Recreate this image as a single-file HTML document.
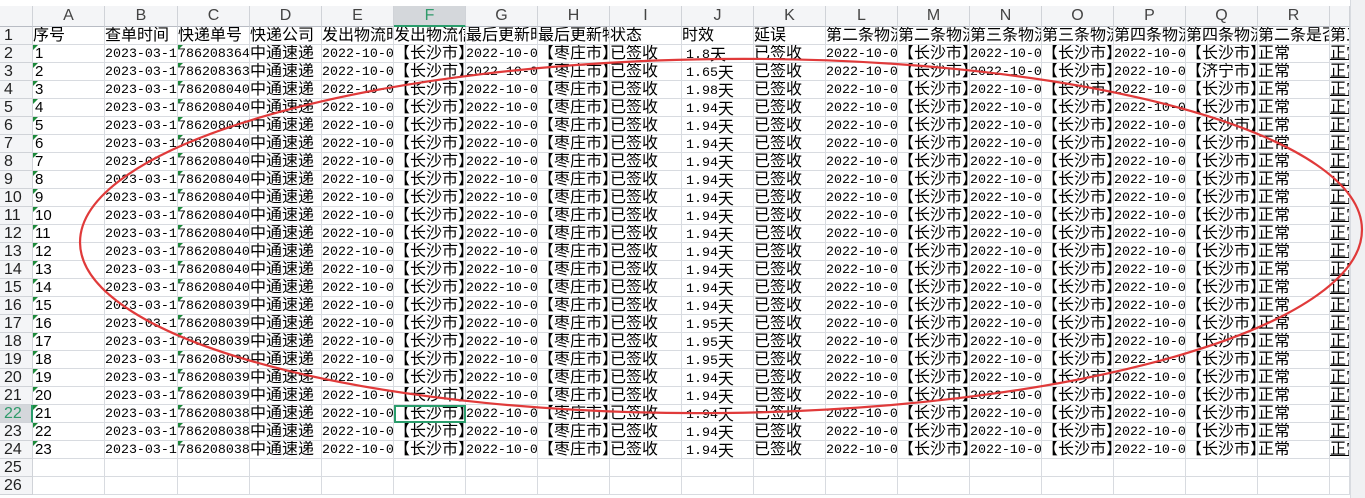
<!DOCTYPE html>
<html><head><meta charset="utf-8">
<style>
html,body{margin:0;padding:0;width:1365px;height:498px;overflow:hidden;background:#fff}
#wrap{position:absolute;left:0;top:0;width:1365px;height:498px;overflow:hidden}
table,thead,tbody{display:block}
table{position:absolute;left:0;top:6px;width:1350px;border-left:0}
tr{display:flex;height:18px}
thead tr{height:21px}
td,th{display:block;flex:none;box-sizing:border-box;height:18px;border-right:1px solid #d8dbe0;border-bottom:1px solid #d8dbe0;padding:0;line-height:18px;overflow:hidden;white-space:nowrap;font-family:"Liberation Sans","Noto Sans CJK SC",sans-serif;font-size:16px;color:#000;text-align:left;font-weight:normal;position:relative;width:72px}
tr>*:nth-child(1){width:33px}
tr>*:nth-child(3){width:73px}
tr>*:nth-child(20){width:20px}
thead th{height:21px;line-height:20px;background:#f4f5f7;color:#444;text-align:center;font-size:16px;border-color:#d0d3d8;border-bottom:1px solid #b8bcc4}
thead th.sel{background:#d4d7db;color:#2f9a6a;border-bottom:2px solid #2a9d6c}
tbody th{background:#f4f5f7;color:#222;padding-left:4px;font-size:16px;border-color:#d0d3d8}
tbody th.sel{background:#d4d7db;color:#2f9a6a;border-right:2px solid #2a9d6c}
.n{font-family:"Liberation Mono",monospace;font-size:13.3px}
.a{font-size:15px;padding-left:2px}
.j{padding-left:4px;font-family:"Liberation Mono",monospace;font-size:13.3px}
.j b{font-family:"Noto Sans CJK SC",sans-serif;font-size:16px;font-weight:normal;line-height:17px;vertical-align:-2px}
td.g::before{content:"";position:absolute;left:0;top:0;border-top:5px solid #1c8a3a;border-right:5px solid transparent}
td.s{outline:2px solid #2a9d6c;outline-offset:-2px}
td.u{text-decoration:underline}
#sb{position:absolute;left:1350px;top:0;width:15px;height:498px;background:#f0f1f3;border-left:1px solid #d8dbe0}
#th{position:absolute;left:1352px;top:42px;width:11px;height:412px;background:#dcdee3;border-radius:5px}
</style></head><body><div id="wrap">
<table>
<thead><tr><th style="background:#f4f5f7"></th><th>A</th><th>B</th><th>C</th><th>D</th><th>E</th><th class="sel">F</th><th>G</th><th>H</th><th>I</th><th>J</th><th>K</th><th>L</th><th>M</th><th>N</th><th>O</th><th>P</th><th>Q</th><th>R</th><th></th></tr></thead>
<tbody>
<tr><th>1</th><td>序号</td><td>查单时间</td><td>快递单号</td><td>快递公司</td><td>发出物流时间</td><td>发出物流信息</td><td>最后更新时间</td><td>最后更新物流</td><td>状态</td><td>时效</td><td>延误</td><td>第二条物流时间</td><td>第二条物流信息</td><td>第三条物流时间</td><td>第三条物流信息</td><td>第四条物流时间</td><td>第四条物流信息</td><td>第二条是否</td><td>第三</td></tr>
<tr><th>2</th><td class="g a">1</td><td class="n">2023-03-14</td><td class="g n">786208364</td><td>中通速递</td><td class="n">2022-10-01</td><td>【长沙市】</td><td class="n">2022-10-01</td><td>【枣庄市】</td><td>已签收</td><td class="j">1.8<b>天</b></td><td>已签收</td><td class="n">2022-10-01</td><td>【长沙市】</td><td class="n">2022-10-01</td><td>【长沙市】</td><td class="n">2022-10-01</td><td>【长沙市】</td><td>正常</td><td class="u">正常</td></tr>
<tr><th>3</th><td class="g a">2</td><td class="n">2023-03-14</td><td class="g n">786208363</td><td>中通速递</td><td class="n">2022-10-01</td><td>【长沙市】</td><td class="n">2022-10-01</td><td>【枣庄市】</td><td>已签收</td><td class="j">1.65<b>天</b></td><td>已签收</td><td class="n">2022-10-01</td><td>【长沙市】</td><td class="n">2022-10-01</td><td>【长沙市】</td><td class="n">2022-10-01</td><td>【济宁市】</td><td>正常</td><td class="u">正常</td></tr>
<tr><th>4</th><td class="g a">3</td><td class="n">2023-03-14</td><td class="g n">786208040</td><td>中通速递</td><td class="n">2022-10-01</td><td>【长沙市】</td><td class="n">2022-10-01</td><td>【枣庄市】</td><td>已签收</td><td class="j">1.98<b>天</b></td><td>已签收</td><td class="n">2022-10-01</td><td>【长沙市】</td><td class="n">2022-10-01</td><td>【长沙市】</td><td class="n">2022-10-01</td><td>【长沙市】</td><td>正常</td><td class="u">正常</td></tr>
<tr><th>5</th><td class="g a">4</td><td class="n">2023-03-14</td><td class="g n">786208040</td><td>中通速递</td><td class="n">2022-10-01</td><td>【长沙市】</td><td class="n">2022-10-01</td><td>【枣庄市】</td><td>已签收</td><td class="j">1.94<b>天</b></td><td>已签收</td><td class="n">2022-10-01</td><td>【长沙市】</td><td class="n">2022-10-01</td><td>【长沙市】</td><td class="n">2022-10-01</td><td>【长沙市】</td><td>正常</td><td class="u">正常</td></tr>
<tr><th>6</th><td class="g a">5</td><td class="n">2023-03-14</td><td class="g n">786208040</td><td>中通速递</td><td class="n">2022-10-01</td><td>【长沙市】</td><td class="n">2022-10-01</td><td>【枣庄市】</td><td>已签收</td><td class="j">1.94<b>天</b></td><td>已签收</td><td class="n">2022-10-01</td><td>【长沙市】</td><td class="n">2022-10-01</td><td>【长沙市】</td><td class="n">2022-10-01</td><td>【长沙市】</td><td>正常</td><td class="u">正常</td></tr>
<tr><th>7</th><td class="g a">6</td><td class="n">2023-03-14</td><td class="g n">786208040</td><td>中通速递</td><td class="n">2022-10-01</td><td>【长沙市】</td><td class="n">2022-10-01</td><td>【枣庄市】</td><td>已签收</td><td class="j">1.94<b>天</b></td><td>已签收</td><td class="n">2022-10-01</td><td>【长沙市】</td><td class="n">2022-10-01</td><td>【长沙市】</td><td class="n">2022-10-01</td><td>【长沙市】</td><td>正常</td><td class="u">正常</td></tr>
<tr><th>8</th><td class="g a">7</td><td class="n">2023-03-14</td><td class="g n">786208040</td><td>中通速递</td><td class="n">2022-10-01</td><td>【长沙市】</td><td class="n">2022-10-01</td><td>【枣庄市】</td><td>已签收</td><td class="j">1.94<b>天</b></td><td>已签收</td><td class="n">2022-10-01</td><td>【长沙市】</td><td class="n">2022-10-01</td><td>【长沙市】</td><td class="n">2022-10-01</td><td>【长沙市】</td><td>正常</td><td class="u">正常</td></tr>
<tr><th>9</th><td class="g a">8</td><td class="n">2023-03-14</td><td class="g n">786208040</td><td>中通速递</td><td class="n">2022-10-01</td><td>【长沙市】</td><td class="n">2022-10-01</td><td>【枣庄市】</td><td>已签收</td><td class="j">1.94<b>天</b></td><td>已签收</td><td class="n">2022-10-01</td><td>【长沙市】</td><td class="n">2022-10-01</td><td>【长沙市】</td><td class="n">2022-10-01</td><td>【长沙市】</td><td>正常</td><td class="u">正常</td></tr>
<tr><th>10</th><td class="g a">9</td><td class="n">2023-03-14</td><td class="g n">786208040</td><td>中通速递</td><td class="n">2022-10-01</td><td>【长沙市】</td><td class="n">2022-10-01</td><td>【枣庄市】</td><td>已签收</td><td class="j">1.94<b>天</b></td><td>已签收</td><td class="n">2022-10-01</td><td>【长沙市】</td><td class="n">2022-10-01</td><td>【长沙市】</td><td class="n">2022-10-01</td><td>【长沙市】</td><td>正常</td><td class="u">正常</td></tr>
<tr><th>11</th><td class="g a">10</td><td class="n">2023-03-14</td><td class="g n">786208040</td><td>中通速递</td><td class="n">2022-10-01</td><td>【长沙市】</td><td class="n">2022-10-01</td><td>【枣庄市】</td><td>已签收</td><td class="j">1.94<b>天</b></td><td>已签收</td><td class="n">2022-10-01</td><td>【长沙市】</td><td class="n">2022-10-01</td><td>【长沙市】</td><td class="n">2022-10-01</td><td>【长沙市】</td><td>正常</td><td class="u">正常</td></tr>
<tr><th>12</th><td class="g a">11</td><td class="n">2023-03-14</td><td class="g n">786208040</td><td>中通速递</td><td class="n">2022-10-01</td><td>【长沙市】</td><td class="n">2022-10-01</td><td>【枣庄市】</td><td>已签收</td><td class="j">1.94<b>天</b></td><td>已签收</td><td class="n">2022-10-01</td><td>【长沙市】</td><td class="n">2022-10-01</td><td>【长沙市】</td><td class="n">2022-10-01</td><td>【长沙市】</td><td>正常</td><td class="u">正常</td></tr>
<tr><th>13</th><td class="g a">12</td><td class="n">2023-03-14</td><td class="g n">786208040</td><td>中通速递</td><td class="n">2022-10-01</td><td>【长沙市】</td><td class="n">2022-10-01</td><td>【枣庄市】</td><td>已签收</td><td class="j">1.94<b>天</b></td><td>已签收</td><td class="n">2022-10-01</td><td>【长沙市】</td><td class="n">2022-10-01</td><td>【长沙市】</td><td class="n">2022-10-01</td><td>【长沙市】</td><td>正常</td><td class="u">正常</td></tr>
<tr><th>14</th><td class="g a">13</td><td class="n">2023-03-14</td><td class="g n">786208040</td><td>中通速递</td><td class="n">2022-10-01</td><td>【长沙市】</td><td class="n">2022-10-01</td><td>【枣庄市】</td><td>已签收</td><td class="j">1.94<b>天</b></td><td>已签收</td><td class="n">2022-10-01</td><td>【长沙市】</td><td class="n">2022-10-01</td><td>【长沙市】</td><td class="n">2022-10-01</td><td>【长沙市】</td><td>正常</td><td class="u">正常</td></tr>
<tr><th>15</th><td class="g a">14</td><td class="n">2023-03-14</td><td class="g n">786208040</td><td>中通速递</td><td class="n">2022-10-01</td><td>【长沙市】</td><td class="n">2022-10-01</td><td>【枣庄市】</td><td>已签收</td><td class="j">1.94<b>天</b></td><td>已签收</td><td class="n">2022-10-01</td><td>【长沙市】</td><td class="n">2022-10-01</td><td>【长沙市】</td><td class="n">2022-10-01</td><td>【长沙市】</td><td>正常</td><td class="u">正常</td></tr>
<tr><th>16</th><td class="g a">15</td><td class="n">2023-03-14</td><td class="g n">786208039</td><td>中通速递</td><td class="n">2022-10-01</td><td>【长沙市】</td><td class="n">2022-10-01</td><td>【枣庄市】</td><td>已签收</td><td class="j">1.94<b>天</b></td><td>已签收</td><td class="n">2022-10-01</td><td>【长沙市】</td><td class="n">2022-10-01</td><td>【长沙市】</td><td class="n">2022-10-01</td><td>【长沙市】</td><td>正常</td><td class="u">正常</td></tr>
<tr><th>17</th><td class="g a">16</td><td class="n">2023-03-14</td><td class="g n">786208039</td><td>中通速递</td><td class="n">2022-10-01</td><td>【长沙市】</td><td class="n">2022-10-01</td><td>【枣庄市】</td><td>已签收</td><td class="j">1.95<b>天</b></td><td>已签收</td><td class="n">2022-10-01</td><td>【长沙市】</td><td class="n">2022-10-01</td><td>【长沙市】</td><td class="n">2022-10-01</td><td>【长沙市】</td><td>正常</td><td class="u">正常</td></tr>
<tr><th>18</th><td class="g a">17</td><td class="n">2023-03-14</td><td class="g n">786208039</td><td>中通速递</td><td class="n">2022-10-01</td><td>【长沙市】</td><td class="n">2022-10-01</td><td>【枣庄市】</td><td>已签收</td><td class="j">1.95<b>天</b></td><td>已签收</td><td class="n">2022-10-01</td><td>【长沙市】</td><td class="n">2022-10-01</td><td>【长沙市】</td><td class="n">2022-10-01</td><td>【长沙市】</td><td>正常</td><td class="u">正常</td></tr>
<tr><th>19</th><td class="g a">18</td><td class="n">2023-03-14</td><td class="g n">786208039</td><td>中通速递</td><td class="n">2022-10-01</td><td>【长沙市】</td><td class="n">2022-10-01</td><td>【枣庄市】</td><td>已签收</td><td class="j">1.95<b>天</b></td><td>已签收</td><td class="n">2022-10-01</td><td>【长沙市】</td><td class="n">2022-10-01</td><td>【长沙市】</td><td class="n">2022-10-01</td><td>【长沙市】</td><td>正常</td><td class="u">正常</td></tr>
<tr><th>20</th><td class="g a">19</td><td class="n">2023-03-14</td><td class="g n">786208039</td><td>中通速递</td><td class="n">2022-10-01</td><td>【长沙市】</td><td class="n">2022-10-01</td><td>【枣庄市】</td><td>已签收</td><td class="j">1.94<b>天</b></td><td>已签收</td><td class="n">2022-10-01</td><td>【长沙市】</td><td class="n">2022-10-01</td><td>【长沙市】</td><td class="n">2022-10-01</td><td>【长沙市】</td><td>正常</td><td class="u">正常</td></tr>
<tr><th>21</th><td class="g a">20</td><td class="n">2023-03-14</td><td class="g n">786208039</td><td>中通速递</td><td class="n">2022-10-01</td><td>【长沙市】</td><td class="n">2022-10-01</td><td>【枣庄市】</td><td>已签收</td><td class="j">1.94<b>天</b></td><td>已签收</td><td class="n">2022-10-01</td><td>【长沙市】</td><td class="n">2022-10-01</td><td>【长沙市】</td><td class="n">2022-10-01</td><td>【长沙市】</td><td>正常</td><td class="u">正常</td></tr>
<tr><th class="sel">22</th><td class="g a">21</td><td class="n">2023-03-14</td><td class="g n">786208038</td><td>中通速递</td><td class="n">2022-10-01</td><td class="s">【长沙市】</td><td class="n">2022-10-01</td><td>【枣庄市】</td><td>已签收</td><td class="j">1.94<b>天</b></td><td>已签收</td><td class="n">2022-10-01</td><td>【长沙市】</td><td class="n">2022-10-01</td><td>【长沙市】</td><td class="n">2022-10-01</td><td>【长沙市】</td><td>正常</td><td class="u">正常</td></tr>
<tr><th>23</th><td class="g a">22</td><td class="n">2023-03-14</td><td class="g n">786208038</td><td>中通速递</td><td class="n">2022-10-01</td><td>【长沙市】</td><td class="n">2022-10-01</td><td>【枣庄市】</td><td>已签收</td><td class="j">1.94<b>天</b></td><td>已签收</td><td class="n">2022-10-01</td><td>【长沙市】</td><td class="n">2022-10-01</td><td>【长沙市】</td><td class="n">2022-10-01</td><td>【长沙市】</td><td>正常</td><td class="u">正常</td></tr>
<tr><th>24</th><td class="g a">23</td><td class="n">2023-03-14</td><td class="g n">786208038</td><td>中通速递</td><td class="n">2022-10-01</td><td>【长沙市】</td><td class="n">2022-10-01</td><td>【枣庄市】</td><td>已签收</td><td class="j">1.94<b>天</b></td><td>已签收</td><td class="n">2022-10-01</td><td>【长沙市】</td><td class="n">2022-10-01</td><td>【长沙市】</td><td class="n">2022-10-01</td><td>【长沙市】</td><td>正常</td><td class="u">正常</td></tr>
<tr><th>25</th><td></td><td></td><td></td><td></td><td></td><td></td><td></td><td></td><td></td><td></td><td></td><td></td><td></td><td></td><td></td><td></td><td></td><td></td><td></td></tr>
<tr><th>26</th><td></td><td></td><td></td><td></td><td></td><td></td><td></td><td></td><td></td><td></td><td></td><td></td><td></td><td></td><td></td><td></td><td></td><td></td><td></td></tr>
</tbody></table>
<div id="sb"><div id="th"></div></div>
<svg width="1365" height="498" style="position:absolute;left:0;top:0" xmlns="http://www.w3.org/2000/svg">
<ellipse cx="721" cy="236" rx="641" ry="177" fill="none" stroke="#e03a3a" stroke-width="2.2" transform="rotate(-0.6 721 236)"/>
</svg>
</div></body></html>
